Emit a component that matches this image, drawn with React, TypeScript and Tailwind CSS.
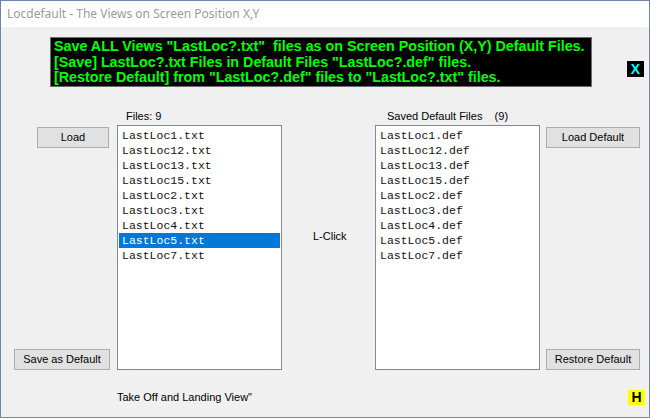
const txtFiles = [
  "LastLoc1.txt",
  "LastLoc12.txt",
  "LastLoc13.txt",
  "LastLoc15.txt",
  "LastLoc2.txt",
  "LastLoc3.txt",
  "LastLoc4.txt",
  "LastLoc5.txt",
  "LastLoc7.txt",
];

const defFiles = txtFiles.map((f) => f.replace(".txt", ".def"));

const WinButton = ({ label, className }: { label: string; className: string }) => (
  <button
    className={`h-[21px] bg-[#e1e1e1] border border-[#adadad] text-[11px] text-black leading-none flex items-center justify-center ${className}`}
  >
    {label}
  </button>
);

const ListBox = ({ items, selected }: { items: string[]; selected?: number }) => (
  <div className="w-[165px] h-[245px] bg-white border border-[#828790] pt-[2px] px-[1px] font-['Liberation_Mono',monospace] text-[11.5px] text-[#111]">
    {items.map((item, i) => (
      <div
        key={item}
        className={`h-[15px] leading-[15px] pl-[3px] whitespace-pre ${
          i === selected ? "bg-[#0078d7] text-white" : ""
        }`}
      >
        {item}
      </div>
    ))}
  </div>
);

export default function App() {
  return (
    <div className="w-[650px] h-[418px] border border-[#6b88ab] flex flex-col bg-[#f0f0f0] font-['Liberation_Sans',Arial,sans-serif] text-[11px] text-black overflow-hidden">
      {/* title bar */}
      <div className="h-[26px] bg-white flex items-center pl-[6px] font-['Noto_Sans',sans-serif] text-[12px] text-[#9a9a9a]">
        Locdefault - The Views on Screen Position X,Y
      </div>

      {/* header */}
      <div className="flex items-start mt-[10px]">
        <div className="ml-[49px] w-[542px] h-[50px] bg-black border border-[#6d6d6d] pl-[3px] pt-[1px] text-[#00ff00] font-bold text-[14.3px] leading-[15.5px] whitespace-pre">
          <div>Save ALL Views "LastLoc?.txt"  files as on Screen Position (X,Y) Default Files.</div>
          <div>[Save] LastLoc?.txt Files in Default Files "LastLoc?.def" files.</div>
          <div>[Restore Default] from "LastLoc?.def" files to "LastLoc?.txt" files.</div>
        </div>
        <div className="ml-[35px] mt-[24px] w-[17px] h-[16px] bg-black text-[#00ffff] font-bold text-[14px] leading-[16px] text-center">
          X
        </div>
      </div>

      {/* main */}
      <div className="flex mt-[23px] h-[260px]">
        <div className="w-[116px] flex flex-col justify-between pt-[17px]">
          <WinButton label="Load" className="ml-[36px] w-[72px]" />
          <WinButton label="Save as Default" className="ml-[13px] w-[96px]" />
        </div>
        <div className="w-[165px] flex flex-col">
          <div className="h-[15px] pl-[9px] leading-[13px]">Files: 9</div>
          <ListBox items={txtFiles} selected={7} />
        </div>
        <div className="w-[93px] pl-[31px] pt-[120px] leading-[13px]">L-Click</div>
        <div className="w-[165px] flex flex-col">
          <div className="h-[15px] pl-[12px] leading-[13px] whitespace-pre">Saved Default Files    (9)</div>
          <ListBox items={defFiles} />
        </div>
        <div className="flex flex-col justify-between pt-[17px] ml-[6px]">
          <WinButton label="Load Default" className="w-[94px]" />
          <WinButton label="Restore Default" className="w-[94px]" />
        </div>
      </div>

      {/* footer */}
      <div className="flex items-center justify-between mt-[20px] h-[15px] pl-[116px] pr-[4px]">
        <span>Take Off and Landing View"</span>
        <div className="w-[17px] h-[15px] bg-[#ffff00] font-bold text-[14px] leading-[15px] text-center">H</div>
      </div>
    </div>
  );
}
